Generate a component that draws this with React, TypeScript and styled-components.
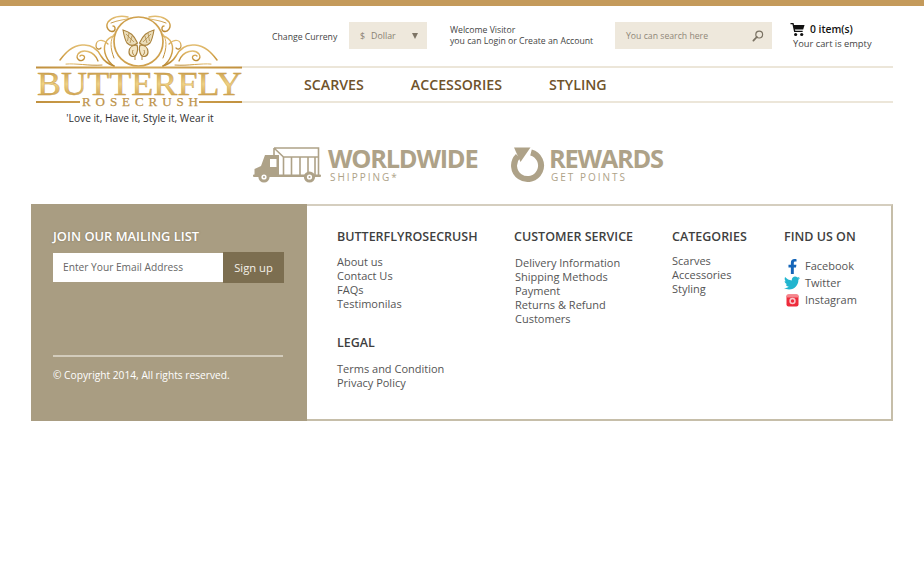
import React from "react";
import styled, { createGlobalStyle } from "styled-components";
import { FaFacebookF, FaTwitter } from "react-icons/fa";

const Global = createGlobalStyle`
  html, body { margin: 0; padding: 0; background: #fff; }
  body { font-family: "Open Sans", "Liberation Sans", sans-serif; color: #4a4a4a; }
  * { box-sizing: border-box; }
`;

const Page = styled.div`
  width: 924px;
  height: 575px;
  overflow: hidden;
  background: #fff;
`;
const TopBar = styled.div`
  height: 6px;
  background: #c49a5b;
`;
const Header = styled.header`
  display: flex;
  padding: 0 31px 0 36px;
  height: 120px;
`;
const LogoCol = styled.div`
  width: 206px;
  padding-top: 8px;
  display: flex;
  flex-direction: column;
`;
const Tagline = styled.div`
  font-size: 10.2px;
  line-height: 14px;
  color: #2f2f2f;
  text-align: center;
  margin: 1px 0 0 2px;
`;
const HeaderMain = styled.div`
  flex: 1;
  display: flex;
  flex-direction: column;
`;
const UtilityRow = styled.div`
  height: 60px;
  display: flex;
  align-items: center;
  padding: 0 0 1px 30px;
`;
const CurrencyLabel = styled.span`
  font-size: 8.7px;
  color: #444;
  width: 77px;
  padding-top: 2px;
`;
const Select = styled.div`
  width: 78px;
  height: 27px;
  background: #eee8dc;
  display: flex;
  align-items: center;
  justify-content: space-between;
  padding: 0 9px 0 11px;
  font-size: 8.8px;
  color: #8a8272;
`;
const Caret = styled.span`
  width: 0;
  height: 0;
  border-left: 3.5px solid transparent;
  border-right: 3.5px solid transparent;
  border-top: 6px solid #7d7465;
`;
const Dollar = styled.span`
  margin-right: 6px;
`;
const Welcome = styled.div`
  margin-left: 23px;
  width: 165px;
  font-size: 8.7px;
  line-height: 11px;
  color: #444;
`;
const SearchBox = styled.div`
  width: 157px;
  height: 27px;
  background: #eee8dc;
  display: flex;
  align-items: center;
  justify-content: space-between;
  padding: 0 8px 0 11px;
  font-size: 8.7px;
  color: #8f8778;
`;
const Cart = styled.div`
  margin-left: 18px;
  display: flex;
  flex-direction: column;
`;
const CartTop = styled.div`
  display: flex;
  align-items: center;
  gap: 5px;
  font-size: 10.3px;
  font-weight: 600;
  color: #111;
  line-height: 15px;
`;
const CartNote = styled.div`
  font-size: 9.3px;
  line-height: 13px;
  color: #444;
  margin: 0 0 0 3px;
`;
const Nav = styled.nav`
  height: 37px;
  display: flex;
  align-items: center;
  gap: 47px;
  padding-left: 62px;
  border-top: 2px solid #ece6d9;
  border-bottom: 2px solid #ece6d9;
`;
const NavLink = styled.a`
  font-size: 14.2px;
  font-weight: 600;
  color: #6f532b;
`;
const Promos = styled.section`
  height: 78px;
  display: flex;
  align-items: flex-start;
  padding: 21px 0 0 253px;
`;
const Promo = styled.div<{ $w: number }>`
  width: ${(p) => p.$w}px;
  display: flex;
  align-items: flex-start;
  color: #aea288;
`;
const PromoText = styled.div<{ $ml: number }>`
  margin-left: ${(p) => p.$ml}px;
  margin-top: -2px;
  display: flex;
  flex-direction: column;
`;
const PromoTitle = styled.div`
  font-size: 25.4px;
  line-height: 26px;
  font-weight: 700;
  letter-spacing: -1.25px;
`;
const PromoSub = styled.div`
  font-size: 10px;
  line-height: 12px;
  letter-spacing: 2px;
  margin-left: 2px;
`;
const Footer = styled.footer`
  margin: 0 31px;
  height: 217px;
  display: flex;
  border-top: 2px solid #d5cebf;
  border-right: 2px solid #c6bea9;
  border-bottom: 2px solid #c6bea9;
`;
const Side = styled.div`
  width: 276px;
  margin-top: -2px;
  margin-bottom: -2px;
  background: #a99d82;
  padding: 23px 23px 0 22px;
  display: flex;
  flex-direction: column;
`;
const SideTitle = styled.div`
  font-size: 12.9px;
  line-height: 18px;
  font-weight: 600;
  color: #fff;
  text-shadow: 0 0 2px rgba(90, 80, 60, 0.5);
`;
const Subscribe = styled.div`
  display: flex;
  align-items: center;
  margin-top: 7px;
  width: 231px;
`;
const EmailField = styled.div`
  width: 170px;
  height: 29px;
  background: #fff;
  padding-left: 10px;
  font-size: 10.2px;
  line-height: 29px;
  color: #666;
`;
const SignUp = styled.div`
  width: 61px;
  height: 31px;
  background: #7c6e50;
  color: #f4f0e8;
  font-size: 11.2px;
  line-height: 31px;
  text-align: center;
`;
const SideRule = styled.div`
  margin-top: 72px;
  height: 2px;
  width: 230px;
  background: #d3ccbc;
`;
const Copyright = styled.div`
  margin-top: 11px;
  font-size: 10.2px;
  line-height: 14px;
  color: #fff;
`;
const Columns = styled.div`
  flex: 1;
  display: flex;
  padding: 22px 0 0 30px;
`;
const Column = styled.div<{ $w: number }>`
  width: ${(p) => p.$w}px;
`;
const Heading = styled.div<{ $mt?: number }>`
  font-size: 12.5px;
  line-height: 18px;
  font-weight: 600;
  color: #3f3f3f;
  margin-top: ${(p) => p.$mt ?? 0}px;
`;
const Links = styled.div<{ $mt: number; $ml?: number }>`
  margin-top: ${(p) => p.$mt}px;
  margin-left: ${(p) => p.$ml ?? 0}px;
  display: flex;
  flex-direction: column;
  font-size: 11px;
  line-height: 14px;
  color: #555;
`;
const Social = styled.div`
  margin-top: 13px;
  display: flex;
  flex-direction: column;
  gap: 3px;
`;
const SocialRow = styled.div`
  display: flex;
  align-items: center;
  font-size: 11px;
  line-height: 14px;
  color: #555;
`;
const SocialIcon = styled.span<{ $c: string; $size?: number }>`
  width: 21px;
  height: 14px;
  display: flex;
  align-items: center;
  justify-content: center;
  padding-right: 5px;
  color: ${(p) => p.$c};
  font-size: ${(p) => p.$size ?? 14}px;
`;

const Swirl = ({ flip }: { flip?: boolean }) => (
  <g transform={flip ? "translate(205 0) scale(-1 1)" : undefined} fill="none" stroke="url(#goldStroke)" strokeLinecap="round">
    <path d="M24 46 C30 38 36 32 46 31 C56 30 62 36 65 42 C68 47 72 50 78 52" strokeWidth="1.5" />
    <path d="M62 47 C58 36 46 35 42 40 C39 45 45 49 48 45 C50 42 46 40 44 42" strokeWidth="1.3" />
    <path d="M30 50 C40 49 52 52 66 51" strokeWidth="1" />
    <path d="M78 22 C70 24 66 32 70 42 C72 47 75 50 78 52" strokeWidth="1.4" />
    <path d="M72 30 C66 24 60 26 60 32 C60 35 63 36 65 34" strokeWidth="1.2" />
    <path d="M92 3 C84 1 76 3 72 8 C69 13 73 19 78 17 C80 15 79 12 77 12" strokeWidth="1.4" />
    <path d="M78 20 C74 26 74 34 78 44" strokeWidth="1" />
    <path d="M75 9 C82 6 88 6 95 4" strokeWidth="0.9" />
  </g>
);

const Wing = ({ flip }: { flip?: boolean }) => (
  <g transform={flip ? "translate(205 0) scale(-1 1)" : undefined}>
    <path d="M101.5 29 C98 21 94 18 87 16 C88 22 89 26 91 29 C94 32 98 32 101.5 29 Z" fill="#eadcb8" stroke="#a9823d" strokeWidth="1.1" />
    <path d="M90 20 L98 28 M93 19 L91.5 27 M96 22 L94 29" stroke="#a9823d" strokeWidth="0.7" />
    <path d="M101 31 C97 31 93 33 93 38 C93 42 97 44 100 41 C101.5 38 102 34 101 31 Z" fill="#f3e6c6" stroke="#a9823d" strokeWidth="1.2" />
    <path d="M97 36 C96 38 96.5 40 98 41 M99 42 L99 46" stroke="#a9823d" strokeWidth="0.9" fill="none" />
  </g>
);

const Logo = () => (
  <svg width="206" height="96" viewBox="0 0 206 96" role="img" aria-label="Butterfly Rosecrush logo">
    <defs>
      <linearGradient id="goldStroke" x1="0" y1="0" x2="0" y2="1">
        <stop offset="0" stopColor="#e2bd72" />
        <stop offset="0.5" stopColor="#d2a24a" />
        <stop offset="1" stopColor="#b98833" />
      </linearGradient>
      <linearGradient id="goldText" x1="0" y1="0" x2="0" y2="1">
        <stop offset="0" stopColor="#b98a36" />
        <stop offset="0.5" stopColor="#f0d283" />
        <stop offset="1" stopColor="#bf8d38" />
      </linearGradient>
      <linearGradient id="goldFlat" gradientUnits="userSpaceOnUse" x1="0" y1="0" x2="206" y2="0">
        <stop offset="0" stopColor="#c1913f" />
        <stop offset="0.5" stopColor="#d7ac5a" />
        <stop offset="1" stopColor="#c1913f" />
      </linearGradient>
    </defs>
    <Swirl />
    <Swirl flip />
    <circle cx="102.5" cy="27.5" r="24.5" fill="#fff" stroke="#cfa14e" strokeWidth="1.7" />
    <Wing />
    <Wing flip />
    <rect x="0" y="52.5" width="206" height="2" fill="url(#goldFlat)" />
    <text x="1" y="81" fontFamily="'Liberation Serif', serif" fontSize="33" textLength="205" lengthAdjust="spacingAndGlyphs" fill="url(#goldText)" stroke="#c4953f" strokeWidth="0.35">BUTTERFLY</text>
    <rect x="0" y="87" width="44" height="2" fill="url(#goldFlat)" />
    <rect x="163" y="87" width="43" height="2" fill="url(#goldFlat)" />
    <text x="46" y="92" fontFamily="'Liberation Serif', serif" fontSize="13" textLength="116" fill="#bd934a" stroke="#bd934a" strokeWidth="0.25">ROSECRUSH</text>
  </svg>
);

const CartIcon = () => (
  <svg width="15" height="15" viewBox="0 0 16 15" fill="none">
    <path d="M0.5 1.2 H3.2 L5 9.5 H13.5" stroke="#111" strokeWidth="1.5" />
    <path d="M3.6 2.6 H15.5 L14 7.6 H4.6 Z" fill="#111" />
    <circle cx="6" cy="12.8" r="1.7" fill="#111" />
    <circle cx="12.5" cy="12.8" r="1.7" fill="#111" />
  </svg>
);

const SearchIcon = () => (
  <svg width="12" height="12" viewBox="0 0 12 12" fill="none" stroke="#7a7263">
    <circle cx="7.2" cy="4.6" r="3.4" strokeWidth="1.2" />
    <path d="M4.8 7 L1.4 10.6" strokeWidth="1.8" strokeLinecap="round" />
  </svg>
);

const TruckIcon = () => (
  <svg width="68" height="36" viewBox="0 0 68 36" fill="none">
    <g stroke="#aea288" strokeWidth="1.6">
      <path d="M21 1 H65.5 V28 M21 1 L30.5 10 H65.5 M21 1 V9" />
      <path d="M30.5 10 V28 M38.5 10 V28 M47 10 V28 M55 10 V28 M62 10 V28" />
    </g>
    <path d="M1.5 28 V22 L8 19 L12 8 H26 V28 Z" fill="#aea288" />
    <path d="M17 12 H23.5 V20 H17 Z" fill="#fff" />
    <rect x="0" y="27.5" width="68" height="2.6" rx="1" fill="#aea288" />
    <circle cx="11" cy="30" r="5.6" fill="#aea288" />
    <circle cx="11" cy="30" r="2.6" fill="#fff" />
    <circle cx="11" cy="30" r="1" fill="#aea288" />
    <circle cx="56.5" cy="30" r="5.6" fill="#aea288" />
    <circle cx="56.5" cy="30" r="2.6" fill="#fff" />
    <circle cx="56.5" cy="30" r="1" fill="#aea288" />
  </svg>
);

const RewardIcon = () => (
  <svg width="35" height="36" viewBox="0 0 35 36" fill="none">
    <path d="M20 5.5 A13.5 13.5 0 1 1 7 9" stroke="#aea288" strokeWidth="6" />
    <path d="M3 0.5 H19.5 L9.5 15 Z" fill="#aea288" />
  </svg>
);

const InstagramIcon = () => (
  <svg width="13" height="13" viewBox="0 0 13 13">
    <rect x="0.5" y="0.5" width="12" height="12" rx="2" fill="#ee2b3b" />
    <rect x="0.5" y="0.5" width="12" height="3" rx="1.2" fill="#f5858c" />
    <circle cx="6.5" cy="7" r="3.2" fill="#f9c8cc" />
    <circle cx="6.5" cy="7" r="1.7" fill="#ee2b3b" />
  </svg>
);

export default function App() {
  return (
    <Page>
      <Global />
      <TopBar />
      <Header>
        <LogoCol>
          <Logo />
          <Tagline>'Love it, Have it, Style it, Wear it</Tagline>
        </LogoCol>
        <HeaderMain>
          <UtilityRow>
            <CurrencyLabel>Change Curreny</CurrencyLabel>
            <Select>
              <span>
                <Dollar>$</Dollar>Dollar
              </span>
              <Caret />
            </Select>
            <Welcome>
              Welcome Visitor
              <br />
              you can Login or Create an Account
            </Welcome>
            <SearchBox>
              <span>You can search here</span>
              <SearchIcon />
            </SearchBox>
            <Cart>
              <CartTop>
                <CartIcon />
                0 item(s)
              </CartTop>
              <CartNote>Your cart is empty</CartNote>
            </Cart>
          </UtilityRow>
          <Nav>
            <NavLink>SCARVES</NavLink>
            <NavLink>ACCESSORIES</NavLink>
            <NavLink>STYLING</NavLink>
          </Nav>
        </HeaderMain>
      </Header>
      <Promos>
        <Promo $w={258}>
          <TruckIcon />
          <PromoText $ml={7}>
            <PromoTitle>WORLDWIDE</PromoTitle>
            <PromoSub>SHIPPING*</PromoSub>
          </PromoText>
        </Promo>
        <Promo $w={160}>
          <RewardIcon />
          <PromoText $ml={3}>
            <PromoTitle>REWARDS</PromoTitle>
            <PromoSub>GET POINTS</PromoSub>
          </PromoText>
        </Promo>
      </Promos>
      <Footer>
        <Side>
          <SideTitle>JOIN OUR MAILING LIST</SideTitle>
          <Subscribe>
            <EmailField>Enter Your Email Address</EmailField>
            <SignUp>Sign up</SignUp>
          </Subscribe>
          <SideRule />
          <Copyright>© Copyright 2014, All rights reserved.</Copyright>
        </Side>
        <Columns>
          <Column $w={177}>
            <Heading>BUTTERFLYROSECRUSH</Heading>
            <Links $mt={9}>
              <span>About us</span>
              <span>Contact Us</span>
              <span>FAQs</span>
              <span>Testimonilas</span>
            </Links>
            <Heading $mt={23}>LEGAL</Heading>
            <Links $mt={10}>
              <span>Terms and Condition</span>
              <span>Privacy Policy</span>
            </Links>
          </Column>
          <Column $w={158}>
            <Heading>CUSTOMER SERVICE</Heading>
            <Links $mt={10} $ml={1}>
              <span>Delivery Information</span>
              <span>Shipping Methods</span>
              <span>Payment</span>
              <span>Returns &amp; Refund</span>
              <span>Customers</span>
            </Links>
          </Column>
          <Column $w={112}>
            <Heading>CATEGORIES</Heading>
            <Links $mt={8}>
              <span>Scarves</span>
              <span>Accessories</span>
              <span>Styling</span>
            </Links>
          </Column>
          <Column $w={100}>
            <Heading>FIND US ON</Heading>
            <Social>
              <SocialRow>
                <SocialIcon $c="#1565b8" $size={15}><FaFacebookF /></SocialIcon>
                Facebook
              </SocialRow>
              <SocialRow>
                <SocialIcon $c="#22b5cf" $size={16}><FaTwitter /></SocialIcon>
                Twitter
              </SocialRow>
              <SocialRow>
                <SocialIcon $c="#ee2b3b"><InstagramIcon /></SocialIcon>
                Instagram
              </SocialRow>
            </Social>
          </Column>
        </Columns>
      </Footer>
    </Page>
  );
}
